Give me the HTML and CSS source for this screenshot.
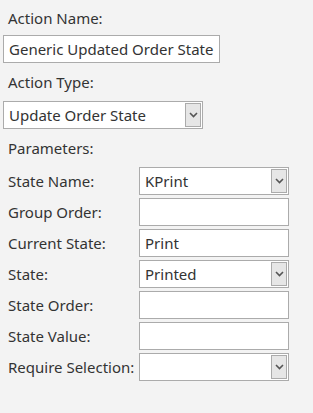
FILE: index.html
```html
<!DOCTYPE html>
<html lang="en">
<head>
  <meta charset="UTF-8">
  <title>Action Settings</title>
  <link rel="stylesheet" href="styles.css">
</head>
<body>

  <div class="panel">
    <div class="caption">Action Name:</div>
    <input class="field name-field" type="text" value="Generic Updated Order State">

    <div class="caption gap">Action Type:</div>
    <div class="combo type-combo">
      <span class="combo-value">Update Order State</span>
      <span class="combo-button">
        <svg width="9" height="6" viewBox="0 0 9 6"><path d="M1 1 L4.5 4.5 L8 1" fill="none" stroke="#555" stroke-width="1.6"/></svg>
      </span>
    </div>

    <div class="caption gap">Parameters:</div>

    <div class="params">
      <div class="param-label">State Name:</div>
      <div class="combo">
        <span class="combo-value">KPrint</span>
        <span class="combo-button">
          <svg width="9" height="6" viewBox="0 0 9 6"><path d="M1 1 L4.5 4.5 L8 1" fill="none" stroke="#555" stroke-width="1.6"/></svg>
        </span>
      </div>

      <div class="param-label">Group Order:</div>
      <input class="field" type="text" value="">

      <div class="param-label">Current State:</div>
      <input class="field" type="text" value="Print">

      <div class="param-label">State:</div>
      <div class="combo">
        <span class="combo-value">Printed</span>
        <span class="combo-button">
          <svg width="9" height="6" viewBox="0 0 9 6"><path d="M1 1 L4.5 4.5 L8 1" fill="none" stroke="#555" stroke-width="1.6"/></svg>
        </span>
      </div>

      <div class="param-label">State Order:</div>
      <input class="field" type="text" value="">

      <div class="param-label">State Value:</div>
      <input class="field" type="text" value="">

      <div class="param-label">Require Selection:</div>
      <div class="combo">
        <span class="combo-value"></span>
        <span class="combo-button">
          <svg width="9" height="6" viewBox="0 0 9 6"><path d="M1 1 L4.5 4.5 L8 1" fill="none" stroke="#555" stroke-width="1.6"/></svg>
        </span>
      </div>
    </div>
  </div>

</body>
</html>
```

FILE: styles.css
```css
body {
  margin: 0;
  background: #f3f3f3;
  color: #333;
  font-family: "Noto Sans", "Open Sans", sans-serif;
  font-size: 15px;
}

.panel {
  padding: 8px 0 0 3px;
}

.caption {
  height: 20px;
  line-height: 20px;
  margin: 0 0 7px 5px;
}

.caption.gap {
  margin-top: 9px;
  margin-bottom: 9px;
}

.field {
  display: block;
  box-sizing: border-box;
  height: 28px;
  margin: 0;
  padding: 0 5px;
  border: 1px solid #ababab;
  background: white;
  color: #333;
  font-family: inherit;
  font-size: 15px;
  outline: none;
}

.name-field {
  width: 217px;
}

.combo {
  box-sizing: border-box;
  display: flex;
  height: 28px;
  padding: 1px;
  border: 1px solid #ababab;
  background: white;
}

.type-combo {
  width: 200px;
}

.combo-value {
  flex: 1;
  padding-left: 4px;
  line-height: 24px;
  white-space: nowrap;
  overflow: hidden;
}

.combo-button {
  box-sizing: border-box;
  width: 16px;
  border: 1px solid #ababab;
  background: #e6e6e6;
  display: flex;
  align-items: center;
  justify-content: center;
}

.params {
  display: grid;
  grid-template-columns: 136px 150px;
  row-gap: 3px;
  margin-top: 2px;
}

.param-label {
  padding-left: 5px;
  line-height: 28px;
  white-space: nowrap;
}
```
